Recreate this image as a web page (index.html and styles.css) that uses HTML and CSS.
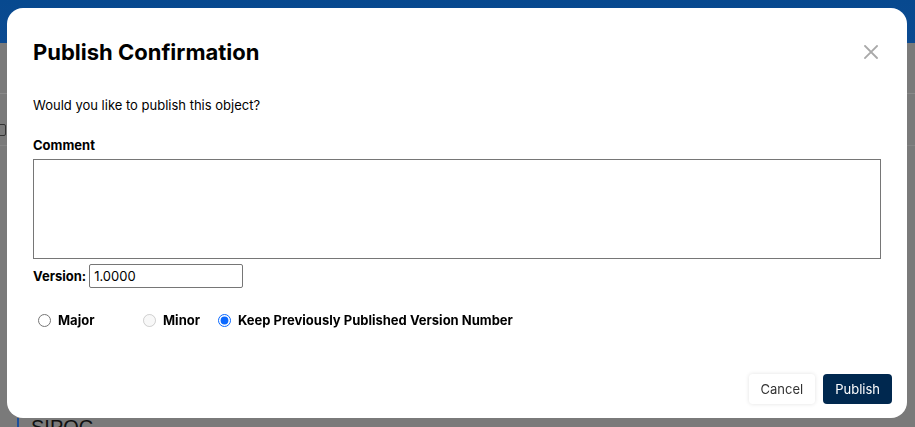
FILE: index.html
```html
<!DOCTYPE html>
<html lang="en">
<head>
    <meta charset="UTF-8">
    <meta name="viewport" content="width=device-width, initial-scale=1.0">
    <title>Publish Confirmation</title>
    <link rel="stylesheet" href="styles.css">
</head>
<body>
    <div class="page">
        <div class="page-header"></div>
        <div class="page-toolbar"></div>
        <div class="page-tabs"><span class="tab-icon"></span></div>
        <div class="page-body"><span class="page-title">SIPOC</span></div>
    </div>

    <div class="overlay">
        <div class="modal">
            <div class="modal-header">
                <h1 class="modal-title">Publish Confirmation</h1>
                <button type="button" class="modal-close" aria-label="Close">
                    <svg width="14" height="14" viewBox="0 0 14 14">
                        <path d="M1 1 L13 13 M13 1 L1 13" stroke="#a9a9a9" stroke-width="1.8" stroke-linecap="square" fill="none"/>
                    </svg>
                </button>
            </div>
            <div class="modal-body">
                <p class="question">Would you like to publish this object?</p>
                <label class="field-label" for="comment">Comment</label>
                <textarea id="comment" class="comment"></textarea>
                <div class="version-row">
                    <label class="field-label" for="version">Version:</label>
                    <input type="text" id="version" class="version-input" value="1.0000">
                </div>
                <div class="radio-row">
                    <label class="radio"><input type="radio" name="bump"> Major</label>
                    <label class="radio"><input type="radio" name="bump" disabled> Minor</label>
                    <label class="radio"><input type="radio" name="bump" checked> Keep Previously Published Version Number</label>
                </div>
            </div>
            <div class="modal-footer">
                <button type="button" class="btn btn-cancel">Cancel</button>
                <button type="button" class="btn btn-publish">Publish</button>
            </div>
        </div>
    </div>
</body>
</html>
```

FILE: styles.css
```css
body {
    margin: 0;
    font-family: Inter, "Noto Sans", sans-serif;
    background-color: #7a7a7a;
    overflow: hidden;
}

/* page behind the dialog, already dimmed */
.page {
    height: 427px;
    display: flex;
    flex-direction: column;
}

.page-header {
    height: 43px;
    background: linear-gradient(#07498f, #0b4a91);
}

.page-toolbar {
    height: 50px;
    border-bottom: 1px solid #8a8a8a;
}

.page-tabs {
    height: 51px;
    border-bottom: 1px solid #858585;
    position: relative;
}

.tab-icon {
    position: absolute;
    left: -4px;
    top: 30px;
    width: 8px;
    height: 10px;
    border: 1px solid #333;
    border-radius: 2px;
}

.page-body {
    flex: 1;
    display: flex;
    align-items: flex-end;
    padding-left: 17px;
}

.page-title {
    border-left: 2px solid #1c4f9c;
    padding-left: 12px;
    font-size: 20px;
    line-height: 18px;
    height: 9px;
    overflow: hidden;
    color: #111;
    font-family: "Liberation Sans", sans-serif;
}

.overlay {
    position: fixed;
    inset: 0;
    display: flex;
    justify-content: flex-start;
    align-items: flex-start;
    padding: 8px 0 0 7px;
}

.modal {
    width: 900px;
    height: 410px;
    box-sizing: border-box;
    background-color: #fff;
    border-radius: 16px;
    display: flex;
    flex-direction: column;
}

.modal-header {
    display: flex;
    justify-content: space-between;
    align-items: center;
    padding: 30px 29px 0 26px;
}

.modal-title {
    margin: 0;
    font-size: 22px;
    line-height: 28px;
    font-weight: 700;
    color: #000;
}

.modal-close {
    border: none;
    background: none;
    padding: 0;
    width: 14px;
    height: 14px;
    display: flex;
}

.modal-body {
    flex: 1;
    padding: 0 26px;
    font-size: 13px;
    color: #000;
}

.question {
    margin: 31px 0 0;
    line-height: 16px;
}

.field-label {
    display: block;
    font-weight: 700;
    line-height: 16px;
    margin-top: 24px;
}

.comment {
    display: block;
    width: 100%;
    height: 100px;
    box-sizing: border-box;
    margin-top: 6px;
    border: 1px solid #767676;
    resize: none;
}

.version-row {
    display: flex;
    align-items: center;
    gap: 3px;
    margin-top: 5px;
}

.version-row .field-label {
    margin-top: 0;
}

.version-input {
    width: 154px;
    height: 24px;
    box-sizing: border-box;
    border: 1px solid #767676;
    border-radius: 2px;
    padding: 0 4px;
    font-family: Inter, sans-serif;
    font-size: 13px;
    color: #000;
}

.radio-row {
    display: flex;
    gap: 18px;
    margin-top: 24px;
    padding-left: 5px;
}

.radio {
    display: flex;
    align-items: center;
    gap: 7px;
    font-weight: 700;
    font-size: 13px;
}

.radio:nth-child(1) {
    width: 87px;
}

.radio input {
    margin: 0;
    width: 13px;
    height: 13px;
    accent-color: #0a68ff;
}

.modal-footer {
    display: flex;
    justify-content: flex-end;
    gap: 8px;
    padding: 0 15px 14px;
}

.btn {
    height: 30px;
    border: none;
    border-radius: 4px;
    font-family: Inter, sans-serif;
    font-size: 13px;
    padding: 0 12px;
}

.btn-cancel {
    background-color: #fff;
    color: #333;
    box-shadow: 0 0 4px rgba(0, 0, 0, 0.12);
}

.btn-publish {
    background-color: #00284f;
    color: #fff;
}
```
